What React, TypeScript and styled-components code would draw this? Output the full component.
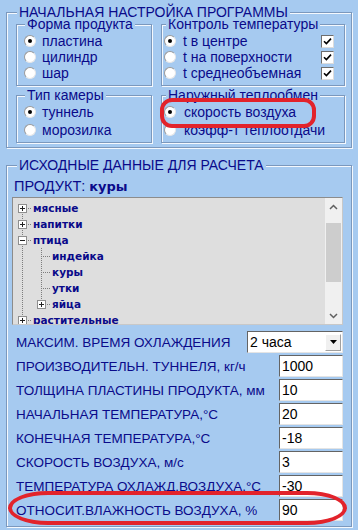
import React from "react";
import styled, { createGlobalStyle } from "styled-components";

const GlobalStyle = createGlobalStyle`
  html, body {
    margin: 0;
    padding: 0;
    background: #a6caf0;
  }
  body {
    font-family: "Liberation Sans", Arial, sans-serif;
  }
`;

const NAVY = "#0a0a8a";

const Page = styled.div`
  position: relative;
  width: 358px;
  height: 530px;
  box-sizing: border-box;
  padding: 6px 6px 0 6px;
  background: #a6caf0;
  color: ${NAVY};
  font-size: 14px;
  overflow: hidden;
`;

const Group = styled.fieldset<{ $pad: string; $mt?: number }>`
  margin: ${p => p.$mt ?? 0}px 0 0 0;
  padding: ${p => p.$pad};
  min-width: 0;
  box-sizing: border-box;
  border: 1px solid #7b98bd;
  box-shadow: inset 1px 1px 0 #f4f8fd, 1px 1px 0 #f4f8fd;
`;

const Legend = styled.legend<{ $ml: number }>`
  margin-left: ${p => p.$ml}px;
  padding: 0 2px;
  font-size: 14px;
  line-height: 12px;
  white-space: nowrap;
  background: #a6caf0;
`;

const TopGrid = styled.div`
  display: grid;
  grid-template-columns: 136px 184px;
  column-gap: 9px;
  row-gap: 3px;
`;

const Option = styled.div<{ $h: number; $gap: number }>`
  display: flex;
  align-items: center;
  height: ${p => p.$h}px;
  gap: ${p => p.$gap}px;
  white-space: nowrap;
`;

const OptionText = styled.span`
  flex: 1;
  font-size: 14px;
`;

const RadioCircle = styled.span`
  display: inline-flex;
  align-items: center;
  justify-content: center;
  flex: none;
  width: 12px;
  height: 12px;
  box-sizing: border-box;
  border-radius: 50%;
  background: #fff;
  border: 1px solid;
  border-color: #9a9a9a #e6e6e6 #e6e6e6 #9a9a9a;
`;

const RadioDot = styled.span`
  width: 4px;
  height: 4px;
  border-radius: 50%;
  background: #000;
`;

const CheckBox = styled.span`
  display: inline-flex;
  align-items: center;
  justify-content: center;
  flex: none;
  width: 13px;
  height: 13px;
  box-sizing: border-box;
  margin-right: 10px;
  background: #fff;
  border: 1px solid;
  border-color: #6e6e6e #dcdcdc #dcdcdc #6e6e6e;
`;

const ProductLine = styled.div`
  height: 18px;
  line-height: 18px;
  font-size: 14.5px;
  padding-left: 2px;
  white-space: nowrap;
`;

const ProductName = styled.b`
  margin-left: 4px;
  font-family: "DejaVu Sans", Verdana, sans-serif;
  font-size: 13px;
`;

const Tree = styled.div`
  display: flex;
  height: 128px;
  margin-top: 2px;
  box-sizing: border-box;
  border: 1px solid;
  border-color: #8c8c8c #c8c8c8 #c8c8c8 #8c8c8c;
  background: #dedede;
`;

const TreeBody = styled.div`
  flex: 1;
  overflow: hidden;
  padding-top: 2px;
`;

const TreeRow = styled.div`
  display: flex;
  height: 16px;
  align-items: center;
`;

const dots = (dir: string) =>
  `repeating-linear-gradient(${dir}, #7d7d7d 0 1px, transparent 1px 2px)`;

const Guide = styled.span<{ $line: boolean }>`
  flex: none;
  width: 19px;
  height: 16px;
  background: ${p => (p.$line ? dots("to bottom") : "none")} 9px 0 / 1px 100% no-repeat;
`;

type Span = "full" | "top" | "bottom";

const NodeCell = styled.span<{ $span: Span }>`
  display: flex;
  align-items: center;
  flex: none;
  width: 19px;
  height: 16px;
  background-image: ${dots("to bottom")}, ${dots("to right")};
  background-repeat: no-repeat;
  background-size: 1px ${p => (p.$span === "full" ? "16px" : "8px")}, 10px 1px;
  background-position: 9px ${p => (p.$span === "bottom" ? "8px" : "0")}, 9px 8px;
`;

const Expander = styled.svg`
  display: block;
  margin-left: 5px;
`;

const NodeText = styled.span`
  margin-left: 1px;
  font-family: "DejaVu Sans", Verdana, sans-serif;
  font-weight: bold;
  font-size: 10.5px;
  line-height: 16px;
  color: ${NAVY};
  white-space: nowrap;
`;

const ScrollBar = styled.div`
  display: flex;
  flex-direction: column;
  flex: none;
  width: 17px;
  background: #f0f0f0;
`;

const ScrollButton = styled.div`
  display: flex;
  align-items: center;
  justify-content: center;
  height: 17px;
  flex: none;
`;

const Thumb = styled.div`
  height: 59px;
  margin: 8px 1px 0 1px;
  background: #cdcdcd;
`;

const Spacer = styled.div`
  flex: 1;
`;

const Fields = styled.div`
  margin-top: 5px;
`;

const FieldRow = styled.div`
  display: flex;
  align-items: center;
  height: 24px;
  padding-left: 4px;
`;

const FieldLabel = styled.span`
  flex: 1;
  font-size: 13.5px;
  white-space: nowrap;
`;

const Input = styled.div<{ $w: number }>`
  display: flex;
  align-items: center;
  width: ${p => p.$w}px;
  height: 22px;
  box-sizing: border-box;
  padding-left: 2px;
  background: #fff;
  border: 1px solid;
  border-color: #646464 #e4e4e4 #e4e4e4 #646464;
  color: #000;
  font-size: 14px;
`;

const ComboText = styled.span`
  flex: 1;
`;

const DropButton = styled.span`
  display: flex;
  align-items: center;
  justify-content: center;
  width: 16px;
  height: 17px;
  margin-right: 1px;
  box-sizing: border-box;
  background: #f0f0f0;
  border: 1px solid;
  border-color: #fff #a0a0a0 #a0a0a0 #fff;
`;

const Highlight = styled.div<{ $radius: string }>`
  position: absolute;
  box-sizing: border-box;
  border: 4px solid #e2232b;
  border-radius: ${p => p.$radius};
  pointer-events: none;
`;

function Radio({ on }: { on?: boolean }) {
  return <RadioCircle>{on && <RadioDot />}</RadioCircle>;
}

function Check() {
  return (
    <CheckBox>
      <svg width="9" height="9" viewBox="0 0 9 9">
        <path d="M1 4.2 L3.4 6.6 L8 1.6" fill="none" stroke="#000" strokeWidth="1.6" />
      </svg>
    </CheckBox>
  );
}

function Box({ open }: { open?: boolean }) {
  return (
    <Expander width="9" height="9" viewBox="0 0 9 9">
      <rect x="0.5" y="0.5" width="8" height="8" fill="#fff" stroke="#8e8e8e" />
      <path d="M2 4.5 H7" stroke="#222" />
      {!open && <path d="M4.5 2 V7" stroke="#222" />}
    </Expander>
  );
}

type Node = {
  label: string;
  level: number;
  span: Span;
  exp?: "plus" | "minus";
};

const nodes: Node[] = [
  { label: "мясные", level: 0, span: "bottom", exp: "plus" },
  { label: "напитки", level: 0, span: "full", exp: "plus" },
  { label: "птица", level: 0, span: "full", exp: "minus" },
  { label: "индейка", level: 1, span: "full" },
  { label: "куры", level: 1, span: "full" },
  { label: "утки", level: 1, span: "full" },
  { label: "яйца", level: 1, span: "top", exp: "plus" },
  { label: "растительные", level: 0, span: "full", exp: "plus" },
];

const fields = [
  { label: "ПРОИЗВОДИТЕЛЬН. ТУННЕЛЯ, кг/ч", value: "1000" },
  { label: "ТОЛЩИНА ПЛАСТИНЫ ПРОДУКТА, мм", value: "10" },
  { label: "НАЧАЛЬНАЯ ТЕМПЕРАТУРА,°С", value: "20" },
  { label: "КОНЕЧНАЯ ТЕМПЕРАТУРА,°С", value: "-18" },
  { label: "СКОРОСТЬ ВОЗДУХА, м/с", value: "3" },
  { label: "ТЕМПЕРАТУРА ОХЛАЖД.ВОЗДУХА,°С", value: "-30" },
  { label: "ОТНОСИТ.ВЛАЖНОСТЬ ВОЗДУХА, %", value: "90" },
];

export default function App() {
  return (
    <Page>
      <GlobalStyle />

      <Group $pad="0 6px 4px 9px">
        <Legend $ml={1}>НАЧАЛЬНАЯ НАСТРОЙКА ПРОГРАММЫ</Legend>
        <TopGrid>
          <Group $pad="3px 0 4px 7px">
            <Legend $ml={1}>Форма продукта</Legend>
            <Option $h={16} $gap={6}><Radio on /><OptionText>пластина</OptionText></Option>
            <Option $h={16} $gap={6}><Radio /><OptionText>цилиндр</OptionText></Option>
            <Option $h={16} $gap={6}><Radio /><OptionText>шар</OptionText></Option>
          </Group>
          <Group $pad="3px 0 4px 2px">
            <Legend $ml={2}>Контроль температуры</Legend>
            <Option $h={16} $gap={7}><Radio on /><OptionText>t в центре</OptionText><Check /></Option>
            <Option $h={16} $gap={7}><Radio /><OptionText>t на поверхности</OptionText><Check /></Option>
            <Option $h={16} $gap={7}><Radio /><OptionText>t среднеобъемная</OptionText><Check /></Option>
          </Group>
          <Group $pad="2px 0 3px 7px">
            <Legend $ml={1}>Тип камеры</Legend>
            <Option $h={18} $gap={6}><Radio on /><OptionText>туннель</OptionText></Option>
            <Option $h={18} $gap={6}><Radio /><OptionText>морозилка</OptionText></Option>
          </Group>
          <Group $pad="2px 0 3px 2px">
            <Legend $ml={2}>Наружный теплообмен</Legend>
            <Option $h={18} $gap={8}><Radio on /><OptionText>скорость воздуха</OptionText></Option>
            <Option $h={18} $gap={8}><Radio /><OptionText>коэфф-т теплоотдачи</OptionText></Option>
          </Group>
        </TopGrid>
      </Group>

      <Group $pad="6px 8px 4px 5px" $mt={11}>
        <Legend $ml={5}>ИСХОДНЫЕ ДАННЫЕ ДЛЯ РАСЧЕТА</Legend>
        <ProductLine>
          ПРОДУКТ:<ProductName>куры</ProductName>
        </ProductLine>

        <Tree>
          <TreeBody>
            {nodes.map(n => (
              <TreeRow key={n.label}>
                {n.level > 0 && <Guide $line />}
                <NodeCell $span={n.span}>
                  {n.exp && <Box open={n.exp === "minus"} />}
                </NodeCell>
                <NodeText>{n.label}</NodeText>
              </TreeRow>
            ))}
          </TreeBody>
          <ScrollBar>
            <ScrollButton>
              <svg width="9" height="6" viewBox="0 0 9 6">
                <path d="M1 5 L4.5 1.5 L8 5" fill="none" stroke="#606060" strokeWidth="1.5" />
              </svg>
            </ScrollButton>
            <Thumb />
            <Spacer />
            <ScrollButton>
              <svg width="9" height="6" viewBox="0 0 9 6">
                <path d="M1 1 L4.5 4.5 L8 1" fill="none" stroke="#606060" strokeWidth="1.5" />
              </svg>
            </ScrollButton>
          </ScrollBar>
        </Tree>

        <Fields>
          <FieldRow>
            <FieldLabel>МАКСИМ. ВРЕМЯ ОХЛАЖДЕНИЯ</FieldLabel>
            <Input $w={96}>
              <ComboText>2 часа</ComboText>
              <DropButton>
                <svg width="7" height="4" viewBox="0 0 7 4">
                  <path d="M0 0 H7 L3.5 4 Z" fill="#000" />
                </svg>
              </DropButton>
            </Input>
          </FieldRow>
          {fields.map(f => (
            <FieldRow key={f.label}>
              <FieldLabel>{f.label}</FieldLabel>
              <Input $w={64}>{f.value}</Input>
            </FieldRow>
          ))}
        </Fields>
      </Group>

      <Highlight $radius="12px" style={{ left: 160, top: 98, width: 156, height: 30 }} />
      <Highlight $radius="40px / 17px" style={{ left: 8, top: 491, width: 339, height: 34 }} />
    </Page>
  );
}
